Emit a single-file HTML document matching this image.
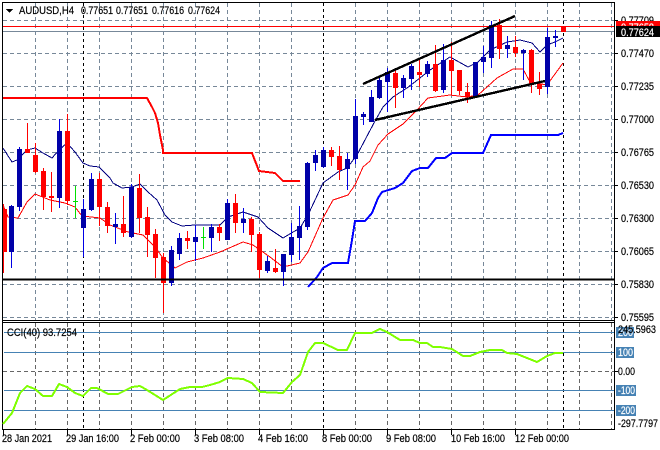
<!DOCTYPE html>
<html><head><meta charset="utf-8"><style>
html,body{margin:0;padding:0;background:#fff;width:660px;height:450px;overflow:hidden}
svg{display:block}
text{font-family:"Liberation Sans",sans-serif;font-size:11px;fill:#000;stroke:#000;stroke-width:.2}
text.w{fill:#fff;stroke:#fff}
</style></head><body>
<svg width="660" height="450" viewBox="0 0 660 450" xmlns="http://www.w3.org/2000/svg" shape-rendering="crispEdges">
<rect width="660" height="450" fill="#fff"/>
<!-- grid main -->
<g stroke="#778899" stroke-dasharray="4 3" fill="none">
<path d="M3 20.5H614M3 53.5H614M3 86.5H614M3 119.5H614M3 152.5H614M3 185.5H614M3 218.5H614M3 251.5H614M3 284.5H614M3 317.5H614"/>
<path d="M35.5 3V320M67.5 3V320M99.5 3V320M131.5 3V320M163.5 3V320M195.5 3V320M227.5 3V320M259.5 3V320M291.5 3V320M355.5 3V320M387.5 3V320M419.5 3V320M451.5 3V320M483.5 3V320M515.5 3V320M547.5 3V320M579.5 3V320M611.5 3V320"/>
<path stroke="#666" stroke-dasharray="4 3" d="M35.5 323V429M67.5 323V429M99.5 323V429M131.5 323V429M163.5 323V429M195.5 323V429M227.5 323V429M259.5 323V429M291.5 323V429M355.5 323V429M387.5 323V429M419.5 323V429M451.5 323V429M483.5 323V429M515.5 323V429M547.5 323V429M579.5 323V429M611.5 323V429M3 371.5H614"/>
</g>
<path d="M83.5 3V320M323.5 3V320M563.5 3V320M83.5 323V429M323.5 323V429M563.5 323V429" stroke="#000" stroke-dasharray="3 3" fill="none"/>
<!-- price lines -->
<path d="M3 31.5H614" stroke="#778899" fill="none"/>
<path d="M3 26.5H614" stroke="#f00" fill="none"/>
<!-- stair lines -->
<polyline fill="none" stroke="#f00" stroke-width="2" points="3,98 147,98 152,107 155,113 158,123 160,135 163,150 163,153 252,153 259,171 275,173 283,181 300,181"/>
<polyline fill="none" stroke="#00f" stroke-width="2" points="308,287 317,277 323,268 332,263 348,263 352,240 355,221 365,221 372,213 378,198 382,192 395,188 403,183 412,171 420,168 428,168 436,158 445,158 452,153 483,153 491,135 558,135 563,133"/>
<!-- MAs -->
<polyline fill="none" stroke="#000080" points="3,148 12,162 17,160 27,150 35,148 43,153 52,158 59,150 67,143 75,152 83,163 90,166 99,167 110,178 113,183 122,188 132,187 140,184 148,192 157,200 165,215 172,222 182,226 195,225 220,225 228,217 243,212 258,217 268,228 283,238 300,228 308,215 323,183 338,172 347,168 357,155 375,121 383,107 393,97 407,88 420,78 430,70 450,57 468,67 478,62 490,50 507,42 520,40 532,43 540,52 547,45 555,42 563,38"/>
<polyline fill="none" stroke="#f00" points="3,205 8,217 18,218 27,202 35,194 50,200 65,203 75,207 82,216 100,218 110,225 128,232 143,235 155,247 163,258 175,268 187,262 203,258 220,252 243,242 253,245 270,257 283,267 300,263 308,252 323,218 333,200 348,195 355,185 363,167 370,161 378,145 388,134 403,124 417,110 428,98 450,95 467,97 478,95 497,78 513,69 523,69 530,82 547,85 563,63"/>
<!-- candles blue -->
<path fill="none" stroke="#0000e6" d="M11.5 205V268M19.5 147V211M59.5 119V208M83.5 199V257M91.5 173V211M115.5 213V244M131.5 184V238M171.5 246V286M179.5 233V260M195.5 225V261M211.5 224V252M227.5 199V240M243.5 208V233M267.5 256V273M283.5 254V286M291.5 223V262M299.5 206V260M307.5 162V230M315.5 150V171M323.5 147V168M347.5 153V190M355.5 99V164M363.5 112V125M371.5 90V122M379.5 77V99M387.5 68V112M403.5 75V98M411.5 64V90M427.5 61V77M443.5 44V93M475.5 62V97M483.5 46V73M491.5 21V68M507.5 36V58M523.5 49V80M547.5 28V94M555.5 30V47"/>
<path fill="#0000a8" d="M9 206h5v46h-5zM17 149h5v58h-5zM57 131h5v67h-5zM81 209h5v19h-5zM89 179h5v31h-5zM113 224h5v3h-5zM129 187h5v50h-5zM169 250h5v33h-5zM177 238h5v16h-5zM193 237h5v5h-5zM209 227h5v11h-5zM225 203h5v37h-5zM241 219h5v4h-5zM265 261h5v10h-5zM281 254h5v18h-5zM289 237h5v18h-5zM297 226h5v12h-5zM305 163h5v64h-5zM313 155h5v8h-5zM321 150h5v17h-5zM345 159h5v10h-5zM353 116h5v43h-5zM361 114h5v3h-5zM369 97h5v25h-5zM377 80h5v18h-5zM385 72h5v10h-5zM401 78h5v10h-5zM409 66h5v13h-5zM425 64h5v10h-5zM441 60h5v30h-5zM473 62h5v35h-5zM481 57h5v5h-5zM489 25h5v33h-5zM505 45h5v4h-5zM521 50h5v3h-5zM545 37h5v50h-5zM553 36h5v2h-5z"/>
<!-- candles red -->
<path fill="none" stroke="#f00" d="M3.5 204V273M27.5 123V153M35.5 143V173M43.5 168V210M51.5 172V212M67.5 114V205M99.5 173V226M107.5 202V233M123.5 196V237M139.5 174V233M147.5 207V257M155.5 229V278M163.5 253V313M187.5 231V249M219.5 224V241M235.5 194V233M251.5 217V252M259.5 232V278M275.5 249V273M331.5 147V166M339.5 146V180M395.5 70V108M419.5 60V87M435.5 45V92M451.5 42V95M459.5 70V95M467.5 83V103M499.5 19V59M515.5 36V57M531.5 49V93M539.5 72V95"/>
<path fill="#f00" d="M3 209h4v43h-4zM25 149h5v4h-5zM33 155h5v17h-5zM41 171h5v26h-5zM49 196h5v2h-5zM65 131h5v70h-5zM97 179h5v28h-5zM105 207h5v19h-5zM121 224h5v9h-5zM137 188h5v30h-5zM145 217h5v18h-5zM153 234h5v24h-5zM161 257h5v26h-5zM185 238h5v3h-5zM217 227h5v6h-5zM233 203h5v20h-5zM249 219h5v16h-5zM257 234h5v36h-5zM273 268h5v4h-5zM329 150h5v7h-5zM337 156h5v14h-5zM393 73h5v15h-5zM417 72h5v3h-5zM433 64h5v27h-5zM449 60h5v11h-5zM457 70h5v21h-5zM465 92h5v5h-5zM497 25h5v24h-5zM513 47h5v6h-5zM529 50h5v35h-5zM537 84h5v5h-5zM561 27h5v5h-5z"/>
<!-- doji green -->
<path fill="none" stroke="#00e000" d="M75.5 186V218M73 201.5h5M203.5 227V249M201 237.5h5"/>
<!-- trend lines -->
<g stroke="#000" fill="none">
<path stroke-width="2.4" d="M363 84L515 16"/>
<path stroke-width="2.4" d="M375 120L545 81"/>
<path stroke-width="2" d="M3 279.5H614"/>
</g>
<!-- frames -->
<g stroke="#000" fill="none">
<path d="M2.5 2V429M2 2.5H614.5V429M2 320.5H615M2 322.5H615M2 429.5H615"/>
<path d="M614 20.5h4M614 53.5h4M614 86.5h4M614 119.5h4M614 152.5h4M614 185.5h4M614 218.5h4M614 251.5h4M614 284.5h4M614 317.5h4M614 371.5h4"/>
<path d="M3.5 429v6M67.5 429v6M131.5 429v6M195.5 429v6M259.5 429v6M323.5 429v6M387.5 429v6M451.5 429v6M515.5 429v6"/>
</g>
<!-- sub window -->
<path d="M4 332.5H614M4 352.5H614M4 390.5H614M4 410.5H614" stroke="#4682b4" fill="none"/>
<polyline fill="none" stroke="#7fff00" stroke-width="2" points="3,424 12,413 20,393 27,386 35,389 43,396 52,396 59,384 67,387 75,393 83,396 91,388 97,388 108,394 118,394 132,387 140,386 147,390 163,400 180,389 190,387 202,387 210,385 220,382 228,378 243,379 252,383 260,392 283,393 292,382 300,375 308,352 315,343 323,343 338,350 347,350 355,333 372,333 380,329 387,332 400,340 413,340 420,343 427,343 433,347 440,347 452,349 463,356 470,356 480,352 490,350 502,350 507,353 517,354 537,362 547,356 555,353 563,353"/>
<!-- title -->
<path d="M6 9h7l-3.5 4z" fill="#000"/>
<text x="19" y="14" textLength="55" lengthAdjust="spacingAndGlyphs">AUDUSD,H4</text>
<text x="81" y="14" textLength="32" lengthAdjust="spacingAndGlyphs">0.77651</text>
<text x="116" y="14" textLength="32" lengthAdjust="spacingAndGlyphs">0.77651</text>
<text x="152" y="14" textLength="32" lengthAdjust="spacingAndGlyphs">0.77616</text>
<text x="188" y="14" textLength="32" lengthAdjust="spacingAndGlyphs">0.77624</text>
<text x="7" y="336" textLength="70" lengthAdjust="spacingAndGlyphs">CCI(40) 93.7254</text>
<!-- price axis -->
<g>
<text x="621" y="24" textLength="33" lengthAdjust="spacingAndGlyphs">0.77709</text>
<rect x="616" y="21" width="44" height="5" fill="#f00"/>
<text class="w" x="621" y="31" textLength="33" lengthAdjust="spacingAndGlyphs">0.77658</text>
<rect x="616" y="26" width="44" height="11" fill="#000"/>
<text class="w" x="621" y="36" textLength="33" lengthAdjust="spacingAndGlyphs">0.77624</text>
<text x="621" y="57" textLength="33" lengthAdjust="spacingAndGlyphs">0.77470</text>
<text x="621" y="90" textLength="33" lengthAdjust="spacingAndGlyphs">0.77235</text>
<text x="621" y="123" textLength="33" lengthAdjust="spacingAndGlyphs">0.77000</text>
<text x="621" y="156" textLength="33" lengthAdjust="spacingAndGlyphs">0.76765</text>
<text x="621" y="189" textLength="33" lengthAdjust="spacingAndGlyphs">0.76530</text>
<text x="621" y="222" textLength="33" lengthAdjust="spacingAndGlyphs">0.76300</text>
<text x="621" y="255" textLength="33" lengthAdjust="spacingAndGlyphs">0.76065</text>
<text x="621" y="288" textLength="33" lengthAdjust="spacingAndGlyphs">0.75830</text>
<text x="621" y="321" textLength="33" lengthAdjust="spacingAndGlyphs">0.75595</text>
</g>
<!-- cci axis -->
<g fill="#4682b4">
<rect x="616" y="327" width="18" height="11"/>
<rect x="616" y="347" width="18" height="11"/>
<rect x="616" y="385" width="20" height="11"/>
<rect x="616" y="405" width="20" height="11"/>
</g>
<text class="w" x="618" y="336" textLength="15" lengthAdjust="spacingAndGlyphs">200</text>
<text x="618" y="333" textLength="38" lengthAdjust="spacingAndGlyphs">245.5963</text>
<text class="w" x="618" y="356" textLength="15" lengthAdjust="spacingAndGlyphs">100</text>
<text x="618" y="375" textLength="17" lengthAdjust="spacingAndGlyphs">0.00</text>
<text class="w" x="618" y="394" textLength="17" lengthAdjust="spacingAndGlyphs">-100</text>
<text class="w" x="618" y="414" textLength="17" lengthAdjust="spacingAndGlyphs">-200</text>
<text x="618" y="427" textLength="40" lengthAdjust="spacingAndGlyphs">-297.7797</text>
<!-- time axis -->
<text x="2" y="442" textLength="50" lengthAdjust="spacingAndGlyphs">28 Jan 2021</text>
<text x="66" y="442" textLength="53" lengthAdjust="spacingAndGlyphs">29 Jan 16:00</text>
<text x="130" y="442" textLength="50" lengthAdjust="spacingAndGlyphs">2 Feb 00:00</text>
<text x="194" y="442" textLength="50" lengthAdjust="spacingAndGlyphs">3 Feb 08:00</text>
<text x="258" y="442" textLength="50" lengthAdjust="spacingAndGlyphs">4 Feb 16:00</text>
<text x="322" y="442" textLength="50" lengthAdjust="spacingAndGlyphs">8 Feb 00:00</text>
<text x="386" y="442" textLength="50" lengthAdjust="spacingAndGlyphs">9 Feb 08:00</text>
<text x="451" y="442" textLength="54" lengthAdjust="spacingAndGlyphs">10 Feb 16:00</text>
<text x="515" y="442" textLength="54" lengthAdjust="spacingAndGlyphs">12 Feb 00:00</text>
</svg>
</body></html>
